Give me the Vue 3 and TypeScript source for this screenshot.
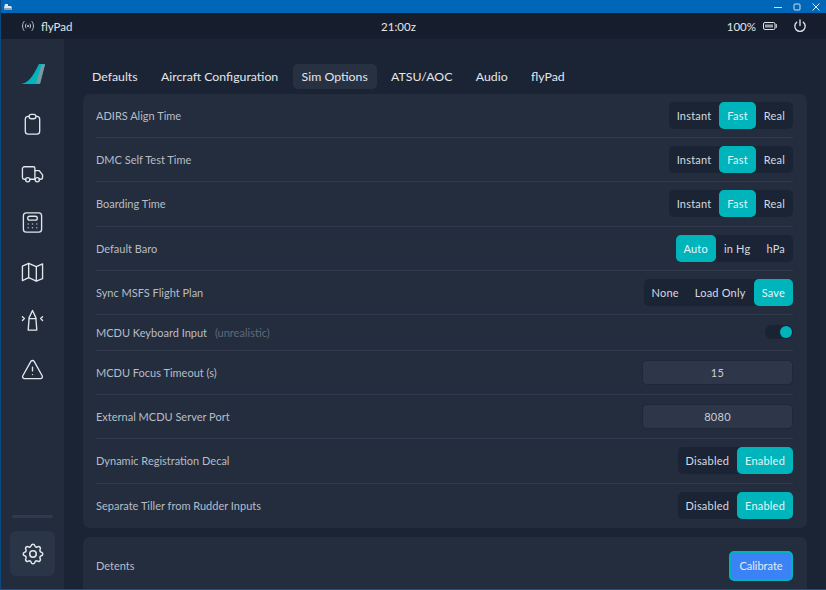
<template>
  <div class="window">
    <div class="titlebar">
      <svg class="app-icon" width="8" height="6" viewBox="0 0 8 6"><path d="M1 0h3v2h3l1 2H0z" fill="#dfe6ee" /><path d="M0 4h8v2H0z" fill="#8fa3b8" /></svg>
      <div class="window-controls">
        <svg width="8" height="8" viewBox="0 0 8 8"><path d="M0 4.5h8" stroke="#cfe0f0" /></svg>
        <svg width="8" height="8" viewBox="0 0 8 8"><rect x="1" y="1" width="6" height="6" rx="1" fill="none" stroke="#cfe0f0" /></svg>
        <svg width="8" height="8" viewBox="0 0 8 8"><path d="M0.5 0.5l7 7M7.5 0.5l-7 7" stroke="#e4eef7" /></svg>
      </div>
    </div>

    <div class="statusbar">
      <div class="status-left">
        <svg width="14" height="12" viewBox="0 0 14 12" fill="none" stroke="#b9c2cc" stroke-width="1" stroke-linecap="round">
          <path d="M3 1.5C1 4 1 8 3 10.500M11 1.500C13 4 13 8 11 10.500M5 4C4.200 5 4.200 7 5 8M9 4C9.800 5 9.800 7 9 8" />
          <circle cx="7" cy="6" r="0.6" fill="#b9c2cc" />
        </svg>
        <span>flyPad</span>
      </div>
      <div class="status-time">21:00z</div>
      <div class="status-right">
        <span>100%</span>
        <svg width="14" height="10" viewBox="0 0 14 10" fill="none" stroke="#dfe4ea">
          <rect x="0.500" y="1.500" width="11.500" height="7" rx="1.500" />
          <path d="M13.300 3.500v3" stroke-linecap="round" />
          <path d="M3 3.500v3M5 3.500v3M7 3.500v3M9 3.500v3" stroke-width="1.300" />
        </svg>
        <svg class="power" width="14" height="14" viewBox="0 0 14 14" fill="none" stroke="#e6eaef" stroke-width="1.300" stroke-linecap="round">
          <path d="M7 1v5.500M3.700 3.200a5.200 5.200 0 1 0 6.600 0" />
        </svg>
      </div>
    </div>

    <div class="body">
      <nav class="sidebar">
        <svg class="logo" width="24" height="21" viewBox="0 0 24 21">
          <path d="M0 20C8 18.500 12 12 18 0h6l-5 20z" fill="#00b4bc" />
          <path d="M20.500 0.500H24l-5 19h-4z" fill="#7f97a3" />
          <path d="M0 20h19v1H0z" fill="#10324a" />
        </svg>

        <svg class="nav-icon" viewBox="0 0 24 24">
          <rect x="4.500" y="3.500" width="15" height="18.500" rx="3" />
          <rect x="8.500" y="1.500" width="7" height="4.500" rx="2.200" fill="#222c3d" />
        </svg>
        <svg class="nav-icon" viewBox="0 0 24 24">
          <path d="M5 18H3.500A2 2 0 0 1 1.500 16V7a2 2 0 0 1 2-2H13a1.500 1.500 0 0 1 1.500 1.500V18H9" />
          <path d="M14.500 9H19l3.500 4.500V16a2 2 0 0 1-2 2H19M15 18h-0.500" />
          <circle cx="7" cy="18.500" r="2.200" />
          <circle cx="17" cy="18.500" r="2.200" />
        </svg>
        <svg class="nav-icon" viewBox="0 0 24 24">
          <rect x="2.500" y="2" width="19" height="20" rx="3" />
          <rect x="7" y="5.500" width="10" height="4" rx="2" />
          <path class="dots" d="M7.500 13.500h.01M12 13.500h.01M16.500 13.500h.01M7.500 17.500h.01M12 17.500h.01M16.500 17.500h.01" />
        </svg>
        <svg class="nav-icon" viewBox="0 0 24 24">
          <path d="M1.500 6.500L8 3.500l8 3.500 6.500-3v15.500L16 22l-8-3.500-6.500 3z" />
          <path d="M8 3.500v15M16 7v15" />
        </svg>
        <svg class="nav-icon" viewBox="0 0 24 24">
          <path d="M12 1.500L8.500 9 7.500 22h9L15.500 9z" />
          <path d="M8.500 10h7" />
          <path d="M1.500 8L3.500 10l-2 2M22.500 8L20.500 10l2 2" />
        </svg>
        <svg class="nav-icon" viewBox="0 0 24 24">
          <path d="M10.300 3.600L1.900 18.500A2 2 0 0 0 3.600 21.500h16.800a2 2 0 0 0 1.700-3L13.700 3.600a2 2 0 0 0-3.400 0z" />
          <path d="M12 9.500v4M12 17.300h.01" />
        </svg>

        <div class="nav-spacer"></div>
        <div class="nav-sep"></div>
        <div class="nav-settings">
          <svg class="nav-icon gear" viewBox="0 0 24 24">
            <path d="M10.325 4.317c.426 -1.756 2.924 -1.756 3.35 0a1.724 1.724 0 0 0 2.573 1.066c1.543 -.94 3.31 .826 2.37 2.37a1.724 1.724 0 0 0 1.065 2.572c1.756 .426 1.756 2.924 0 3.35a1.724 1.724 0 0 0 -1.066 2.573c.94 1.543 -.826 3.31 -2.37 2.37a1.724 1.724 0 0 0 -2.572 1.065c-.426 1.756 -2.924 1.756 -3.35 0a1.724 1.724 0 0 0 -2.573 -1.066c-1.543 .94 -3.31 -.826 -2.37 -2.37a1.724 1.724 0 0 0 -1.065 -2.572c-1.756 -.426 -1.756 -2.924 0 -3.35a1.724 1.724 0 0 0 1.066 -2.573c-.94 -1.543 .826 -3.31 2.37 -2.37c1 .608 2.296 .07 2.572 -1.065z" />
            <circle cx="12" cy="12" r="3" />
          </svg>
        </div>
      </nav>

      <main class="content">
        <div class="tabs">
          <span v-for="tab in tabs" :key="tab" class="tab" :class="{ active: tab === 'Sim Options' }">{{ tab }}</span>
        </div>

        <section class="card">
          <div v-for="row in rows" :key="row.label" class="row" :class="{ short: row.kind === 'toggle' }">
            <div class="row-label">
              {{ row.label }}
              <span v-if="row.note" class="row-note">{{ row.note }}</span>
            </div>

            <div v-if="row.kind === 'segments'" class="segments">
              <span v-for="opt in row.options" :key="opt" class="segment" :class="{ selected: opt === row.value }">{{ opt }}</span>
            </div>
            <div v-else-if="row.kind === 'toggle'" class="toggle"><i class="knob"></i></div>
            <div v-else class="field">{{ row.value }}</div>
          </div>
        </section>

        <section class="card detents">
          <div class="row-label">Detents</div>
          <button class="calibrate">Calibrate</button>
        </section>
      </main>
    </div>
  </div>
</template>

<script setup lang="ts">
interface Row {
  label: string
  kind: 'segments' | 'toggle' | 'field'
  note?: string
  options?: string[]
  value?: string
}

const tabs = ['Defaults', 'Aircraft Configuration', 'Sim Options', 'ATSU/AOC', 'Audio', 'flyPad']

const timing = ['Instant', 'Fast', 'Real']
const onOff = ['Disabled', 'Enabled']

const rows: Row[] = [
  { label: 'ADIRS Align Time', kind: 'segments', options: timing, value: 'Fast' },
  { label: 'DMC Self Test Time', kind: 'segments', options: timing, value: 'Fast' },
  { label: 'Boarding Time', kind: 'segments', options: timing, value: 'Fast' },
  { label: 'Default Baro', kind: 'segments', options: ['Auto', 'in Hg', 'hPa'], value: 'Auto' },
  { label: 'Sync MSFS Flight Plan', kind: 'segments', options: ['None', 'Load Only', 'Save'], value: 'Save' },
  { label: 'MCDU Keyboard Input', note: '(unrealistic)', kind: 'toggle' },
  { label: 'MCDU Focus Timeout (s)', kind: 'field', value: '15' },
  { label: 'External MCDU Server Port', kind: 'field', value: '8080' },
  { label: 'Dynamic Registration Decal', kind: 'segments', options: onOff, value: 'Enabled' },
  { label: 'Separate Tiller from Rudder Inputs', kind: 'segments', options: onOff, value: 'Enabled' }
]
</script>

<style>
html,
body {
  margin: 0;
  background: #1b2434;
  overflow: hidden;
}
</style>

<style scoped>
.window {
  width: 826px;
  height: 590px;
  box-sizing: border-box;
  display: flex;
  flex-direction: column;
  overflow: hidden;
  border-left: 1px solid #0b4a80;
  border-bottom: 1px solid #0b5a80;
  font-family: Lato, "Open Sans", "Liberation Sans", sans-serif;
  color: #e2e6ea;
  background: #1b2434;
}

.titlebar {
  height: 13px;
  flex: none;
  margin-left: -1px;
  padding: 0 6px 0 4px;
  display: flex;
  align-items: center;
  justify-content: space-between;
  background: #0067b8;
}

.window-controls {
  display: flex;
  gap: 11px;
}

.statusbar {
  height: 26px;
  flex: none;
  padding: 0 20px;
  display: grid;
  grid-template-columns: 1fr auto 1fr;
  align-items: center;
  background: #161e2d;
  font-size: 11.500px;
}

.status-left {
  display: flex;
  align-items: center;
  gap: 6px;
}

.status-time {
  margin-right: 30px;
}

.status-right {
  display: flex;
  align-items: center;
  justify-content: flex-end;
  gap: 7px;
}

.power {
  margin-left: 9px;
  margin-right: -1px;
}

.body {
  flex: 1;
  min-height: 0;
  display: flex;
}

.sidebar {
  width: 63px;
  flex: none;
  box-sizing: border-box;
  padding: 25px 0 13px;
  display: flex;
  flex-direction: column;
  align-items: center;
  background: #222c3d;
}

.logo {
  margin-bottom: 28px;
}

.nav-icon {
  width: 23px;
  height: 23px;
  flex: none;
  margin-bottom: 26px;
  fill: none;
  stroke: #e1e6ea;
  stroke-width: 1.400;
  stroke-linecap: round;
  stroke-linejoin: round;
}

.nav-icon .dots {
  stroke-width: 1.600;
  stroke: #a9b4c0;
}

.nav-spacer {
  flex: 1;
}

.nav-sep {
  width: 41px;
  height: 3px;
  border-radius: 2px;
  margin-bottom: 13px;
  background: #2f3a4c;
}

.nav-settings {
  width: 45px;
  height: 45px;
  border-radius: 6px;
  display: flex;
  align-items: center;
  justify-content: center;
  background: #2a3547;
}

.nav-icon.gear {
  width: 26px;
  height: 26px;
  margin: 0;
}

.content {
  flex: 1;
  min-width: 0;
  padding: 25px 19px 0;
  overflow: hidden;
}

.tabs {
  display: flex;
  gap: 5.400px;
  margin-bottom: 5px;
}

.tab {
  height: 25px;
  padding: 0 9px;
  border-radius: 5px;
  display: flex;
  align-items: center;
  font-size: 12.300px;
  color: #e3e6ea;
}

.tab.active {
  background: #273142;
}

.card {
  padding: 0 14px 0 13px;
  border-radius: 7px;
  background: #232d3e;
}

.row {
  height: 44.200px;
  box-sizing: border-box;
  display: flex;
  align-items: center;
  justify-content: space-between;
  border-bottom: 1px solid #2f394b;
}

.row:last-child {
  border-bottom: none;
}

.row.short {
  height: 36px;
}

.row-label {
  font-size: 11px;
  color: #b6bdc6;
}

.row-note {
  margin-left: 5px;
  color: #5f6a7a;
}

.segments {
  height: 27px;
  display: flex;
  border-radius: 5px;
  background: #1b2434;
}

.segment {
  padding: 0 8px;
  border-radius: 5px;
  display: flex;
  align-items: center;
  font-size: 11px;
  letter-spacing: 0.200px;
  color: #d5dae0;
}

.segment.selected {
  background: #00b4bc;
  color: #e5f5f6;
}

.toggle {
  width: 28px;
  height: 14px;
  box-sizing: border-box;
  padding: 1px 1px 1px 0;
  border-radius: 7px;
  display: flex;
  justify-content: flex-end;
  background: #1a2333;
}

.knob {
  width: 12px;
  height: 12px;
  border-radius: 50%;
  background: #00b4bc;
}

.field {
  width: 151px;
  height: 25px;
  box-sizing: border-box;
  border: 1px solid #1f2838;
  border-radius: 5px;
  display: flex;
  align-items: center;
  justify-content: center;
  font-size: 11px;
  letter-spacing: 0.300px;
  color: #c9ced5;
  background: #2d3749;
}

.detents {
  height: 58px;
  margin-top: 9px;
  display: flex;
  align-items: center;
  justify-content: space-between;
}

.calibrate {
  width: 64px;
  height: 30px;
  padding: 0;
  border: 2px solid #00b4bc;
  border-radius: 5px;
  font: inherit;
  font-size: 11px;
  color: #e4ecf8;
  background: #3b82f6;
}
</style>
